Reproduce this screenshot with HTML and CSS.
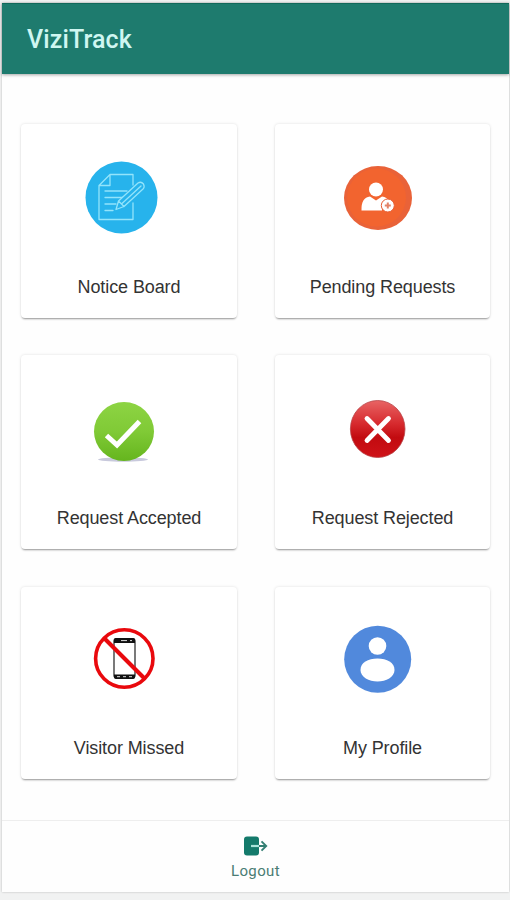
FILE: index.html
```html
<!DOCTYPE html>
<html lang="en">
<head>
<meta charset="utf-8">
<title>ViziTrack</title>
<link rel="stylesheet" href="styles.css">
</head>
<body>
<div class="app">
  <header class="bar"><h1 class="title">ViziTrack</h1></header>
  <main class="grid">
    <section class="card">
      <svg class="icon" viewBox="0 0 110 110">
        <circle cx="47.500" cy="53.500" r="36" fill="#27b3ec"/>
        <g fill="none" stroke="#93e4fb" stroke-width="1.300" stroke-linejoin="round" stroke-linecap="round">
          <path d="M59 41V30.500H36L25 41.500V75.500H59V59M25 41.500H36V30.500"/>
          <path d="M31 47H53M31 53.500H49M31 60H42M31 66.500H39"/>
          <path d="M42 65.500L44.500 57L64 39Q67 37 69.500 40Q71 43 69 45L50 62.500ZM44.500 57L50 62.500M48 59.500L67 42" fill="#27b3ec"/>
        </g>
      </svg>
      <p class="label">Notice Board</p>
    </section>
    <section class="card">
      <svg class="icon" viewBox="0 0 110 110">
        <ellipse cx="50" cy="54" rx="34" ry="32" fill="#e96238"/>
        <ellipse cx="48.500" cy="53.500" rx="29.500" ry="29" fill="#f2642f"/>
        <circle cx="48" cy="45.500" r="7" fill="#fff"/>
        <path d="M33.500 66.500Q33 53.500 42 52.500L48 56.500L54 52.500Q59 53 61 57Q54 58 54 66.500Z" fill="#fff"/>
        <circle cx="59.800" cy="61.500" r="6.500" fill="#fff" stroke="#e85f34"/>
        <path d="M59.800 58.500V64.500M56.800 61.500H62.800" stroke="#e38469" stroke-width="2"/>
      </svg>
      <p class="label">Pending Requests</p>
    </section>
    <section class="card">
      <svg class="icon" viewBox="0 0 110 110">
        <defs><linearGradient id="green" x1="0" y1="0" x2="0" y2="1"><stop offset="0" stop-color="#8dd443"/><stop offset=".5" stop-color="#80ca36"/><stop offset="1" stop-color="#65b51e"/></linearGradient></defs>
        <ellipse cx="49" cy="84.500" rx="25" ry="2.200" fill="#c8c9dc"/>
        <ellipse cx="50" cy="56.500" rx="30" ry="29.500" fill="url(#green)"/>
        <path d="M32.500 60.500L43 70L65.500 46.500" fill="none" stroke="#fff" stroke-width="5"/>
      </svg>
      <p class="label">Request Accepted</p>
    </section>
    <section class="card">
      <svg class="icon" viewBox="0 0 110 110">
        <defs><linearGradient id="red" x1="0" y1="0" x2="0" y2="1"><stop offset="0" stop-color="#e86464"/><stop offset=".4" stop-color="#d72b2f"/><stop offset=".65" stop-color="#c20b10"/><stop offset="1" stop-color="#cf1218"/></linearGradient></defs>
        <ellipse cx="49.700" cy="54" rx="27.300" ry="28.500" fill="url(#red)" stroke="#b84448" stroke-width=".8"/>
        <path d="M39 43.500L60.500 65.500M60.500 43.500L39 65.500" stroke="#fff" stroke-width="4.800" stroke-linecap="round"/>
      </svg>
      <p class="label">Request Rejected</p>
    </section>
    <section class="card">
      <svg class="icon" viewBox="0 0 110 110">
        <rect x="40" y="31.500" width="21" height="39.500" rx="2.500" fill="#fff" stroke="#222" stroke-width="1.200"/>
        <path d="M40 36V33Q40 31 42 31H59Q61 31 61 33V36ZM40 67.500H61V70Q61 72 59 72H42Q40 72 40 70Z" fill="#111"/>
        <path d="M47 33.600H53M56 33.600H58M43 69.700H46M49 69.700H52M55 69.700H58" stroke="#ddd" stroke-width="1"/>
        <circle cx="50.300" cy="51.500" r="28.700" fill="none" stroke="#e9090d" stroke-width="3.600"/>
        <path d="M30.500 31.500L70.500 71.500" stroke="#e9090d" stroke-width="4"/>
      </svg>
      <p class="label">Visitor Missed</p>
    </section>
    <section class="card">
      <svg class="icon" viewBox="0 0 110 110">
        <circle cx="49.700" cy="52.300" r="33.500" fill="#5189dc"/>
        <circle cx="49.500" cy="39" r="8.800" fill="#fff"/>
        <path d="M32.500 63C32.500 55.500 40 51.500 49.500 51.500S66.500 55.500 66.500 63C66.500 70 58 74.500 49.500 74.500S32.500 70 32.500 63Z" fill="#fff"/>
      </svg>
      <p class="label">My Profile</p>
    </section>
  </main>
  <footer class="tabs">
    <svg class="exit" viewBox="0 0 24 20">
      <path d="M3 .5H12Q15 .5 15 3.500V16.500Q15 19.500 12 19.500H3Q0 19.500 0 16.500V3.500Q0 .5 3 .5Z" fill="#147a6b"/>
      <path d="M7 10H16" stroke="#a9e3da" stroke-width="2.200"/>
      <path d="M15 10H22M17.500 5.300L22.200 10L17.500 14.700" fill="none" stroke="#347f73" stroke-width="1.900"/>
    </svg>
    <span class="logout">Logout</span>
  </footer>
</div>
</body>
</html>
```
FILE: styles.css
```css
* { box-sizing: border-box; }
body {
  margin: 0;
  height: 900px;
  padding: 3px 1px 8px 2px;
  background: #f1f2f2;
  font-family: "Liberation Sans", Arial, sans-serif;
  overflow: hidden;
}
.app {
  height: 889px;
  display: flex;
  flex-direction: column;
  background: #fefefe;
  box-shadow: 0 0 2px #b9b9b9;
}
.bar {
  height: 71px;
  padding-left: 25px;
  display: flex;
  align-items: center;
  background: #1e7b6e;
  border-top: 1px solid #12695b;
  box-shadow: 0 1px 3px rgba(0, 0, 0, .35);
}
.title {
  margin: 0;
  color: #cff6f1;
  font-family: Roboto, sans-serif;
  font-size: 25px;
  font-weight: 500;
  letter-spacing: .12px;
}
.grid {
  flex: 1;
  padding: 50px 19px 0;
  display: grid;
  grid-template-columns: 216px 215px;
  grid-template-rows: 194px 194px 192px;
  column-gap: 38px;
  row-gap: 37px;
}
.card {
  padding-top: 20px;
  display: flex;
  flex-direction: column;
  align-items: center;
  background: #fff;
  border-radius: 4px;
  box-shadow: 0 2px 2px -1px rgba(0, 0, 0, .38), 0 0 3px rgba(0, 0, 0, .13);
}
.card:nth-child(n + 5) { margin-top: 1px; margin-bottom: -1px; }
.card:nth-child(n + 5) .label { margin-top: 20px; }
.icon { width: 110px; height: 110px; flex: none; }
.label {
  margin: 22px 0 0;
  color: #333;
  font-size: 18px;
  line-height: 22px;
  letter-spacing: -.1px;
  white-space: nowrap;
}
.tabs {
  height: 72px;
  padding-top: 15px;
  display: flex;
  flex-direction: column;
  align-items: center;
  border-top: 1px solid #eee;
}
.exit { width: 24px; height: 20px; }
.logout {
  margin-top: 5px;
  color: #4a7d74;
  font: 400 15px/20px Roboto, sans-serif;
  letter-spacing: .4px;
}
```
